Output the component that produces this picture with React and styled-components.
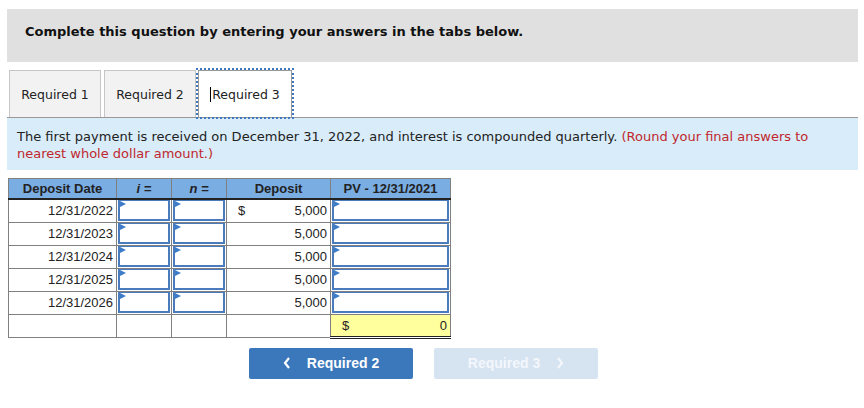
import styled, { createGlobalStyle } from "styled-components";

const GlobalStyle = createGlobalStyle`
  html, body {
    margin: 0;
    padding: 0;
    background: #fff;
  }
`;

const Page = styled.div`
  padding: 9px 6px 0 7px;
  width: 851px;
  font-family: "DejaVu Sans", Verdana, sans-serif;
`;

const Instructions = styled.div`
  background: #e0e0e0;
  height: 53px;
  box-sizing: border-box;
  padding: 15px 0 0 18px;
  font-size: 13px;
  font-weight: bold;
  color: #111;
`;

const TabBar = styled.div`
  display: flex;
  align-items: flex-end;
  margin-top: 8px;
  padding-left: 2px;
  border-bottom: 1px solid #999;
  gap: 3px;
`;

const Tab = styled.div`
  width: ${(p) => (p.$active ? "92px" : "90px")};
  height: 46px;
  display: flex;
  align-items: center;
  justify-content: center;
  font-size: 12.5px;
  color: #222;
  background: ${(p) => (p.$active ? "#fff" : "#f2f2f2")};
  border: 1px solid #c6c6c6;
  border-bottom: none;
  box-sizing: content-box;
  ${(p) =>
    p.$active &&
    `
    border-color: #999;
    outline: 2px dotted #3f78c0;
    outline-offset: 0;
    margin-left: -1px;
  `}
`;

const Caret = styled.span`
  display: inline-block;
  width: 1px;
  height: 15px;
  background: #000;
  margin-right: 1px;
`;

const Prompt = styled.div`
  background: #d9ecf9;
  padding: 10px 10px 8px 10px;
  font-size: 13px;
  line-height: 17px;
  color: #222;
`;

const Hint = styled.span`
  color: #c0282d;
`;

const Grid = styled.table`
  border-collapse: collapse;
  margin: 8px 0 0 1px;
  font-family: "Liberation Sans", Arial, sans-serif;
  font-size: 13px;
  color: #222;
  table-layout: fixed;
`;

const Head = styled.th`
  background: #7aade2;
  border: 1px solid #808080;
  border-bottom: 2px solid #222;
  height: 19px;
  padding: 0;
  font-weight: bold;
  font-style: ${(p) => (p.$italic ? "italic" : "normal")};
  text-align: center;
  width: ${(p) => p.$w}px;
`;

const Cell = styled.td`
  border: 1px solid #808080;
  height: 23px;
  box-sizing: border-box;
  padding: ${(p) => (p.$input ? "0" : "0 3px")};
  text-align: right;
  background: ${(p) => (p.$total ? "#ffff9e" : "#fff")};
  ${(p) => p.$total && "border-bottom: 3px double #222;"}
`;

const Money = styled.div`
  display: flex;
  justify-content: space-between;
  padding-left: 8px;
`;

const Entry = styled.div`
  position: relative;
  height: 18px;
  margin: 0 1px;
  border: 2px solid #4a7cbd;
  border-top-width: 1px;
  background: #fff;

  &::before {
    content: "";
    position: absolute;
    left: 0;
    top: 0;
    border-top: 3px solid transparent;
    border-bottom: 3px solid transparent;
    border-left: 6px solid #3d7cc9;
  }
`;

const Nav = styled.div`
  display: flex;
  gap: 21px;
  margin: 9px 0 0 242px;
`;

const NavButton = styled.button`
  width: 164px;
  height: 31px;
  border: none;
  border-radius: 2px;
  background: ${(p) => (p.$disabled ? "#d6e3f1" : "#3a77bb")};
  color: ${(p) => (p.$disabled ? "#f3f7fc" : "#fff")};
  font-family: "Liberation Sans", Arial, sans-serif;
  font-weight: bold;
  font-size: 14px;
  display: flex;
  align-items: center;
  justify-content: center;
  gap: 16px;
  padding: 0;
`;

const Chevron = ({ dir }) => (
  <svg width="8" height="12" viewBox="0 0 8 12">
    <path
      d={dir === "left" ? "M6 1 L2 6 L6 11" : "M2 1 L6 6 L2 11"}
      fill="none"
      stroke="currentColor"
      strokeWidth="2.2"
    />
  </svg>
);

const rows = ["12/31/2022", "12/31/2023", "12/31/2024", "12/31/2025", "12/31/2026"];

const App = () => {
  return (
    <Page>
      <GlobalStyle />
      <Instructions>Complete this question by entering your answers in the tabs below.</Instructions>
      <TabBar>
        <Tab>Required 1</Tab>
        <Tab>Required 2</Tab>
        <Tab $active>
          <Caret />
          Required 3
        </Tab>
      </TabBar>
      <Prompt>
        The first payment is received on December 31, 2022, and interest is compounded quarterly.{" "}
        <Hint>(Round your final answers to nearest whole dollar amount.)</Hint>
      </Prompt>
      <Grid>
        <thead>
          <tr>
            <Head $w={107}>Deposit Date</Head>
            <Head $w={54} $italic>i =</Head>
            <Head $w={54} $italic>n =</Head>
            <Head $w={103}>Deposit</Head>
            <Head $w={119}>PV - 12/31/2021</Head>
          </tr>
        </thead>
        <tbody>
          {rows.map((d, i) => (
            <tr key={d}>
              <Cell>{d}</Cell>
              <Cell $input>
                <Entry />
              </Cell>
              <Cell $input>
                <Entry />
              </Cell>
              <Cell>
                {i === 0 ? (
                  <Money>
                    <span>$</span>
                    <span>5,000</span>
                  </Money>
                ) : (
                  "5,000"
                )}
              </Cell>
              <Cell $input>
                <Entry />
              </Cell>
            </tr>
          ))}
          <tr>
            <Cell />
            <Cell />
            <Cell />
            <Cell />
            <Cell $total>
              <Money>
                <span>$</span>
                <span>0</span>
              </Money>
            </Cell>
          </tr>
        </tbody>
      </Grid>
      <Nav>
        <NavButton>
          <Chevron dir="left" />
          Required 2
        </NavButton>
        <NavButton $disabled>
          Required 3
          <Chevron dir="right" />
        </NavButton>
      </Nav>
    </Page>
  );
};

export default App;
